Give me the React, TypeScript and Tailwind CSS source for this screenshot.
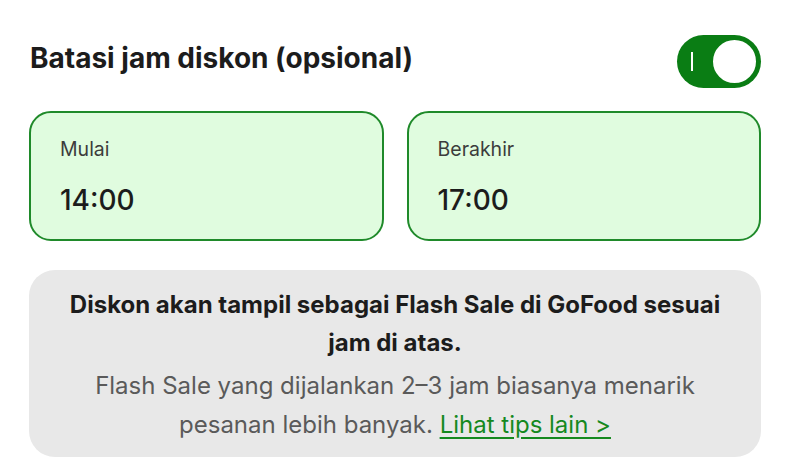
import React from "react";

const TimeCard = ({ label, value }: { label: string; value: string }) => {
  return (
    <div className="flex-1 h-[130px] rounded-[22px] border-2 border-[#1f8a2a] bg-[#e0fcdf] pl-[29px] pt-[24px]">
      <div className="text-[19.5px] leading-[24px] text-[#3c3c3c]">{label}</div>
      <div className="mt-[23px] text-[28px] leading-[32px] font-medium text-[#1c1c1c]">
        {value}
      </div>
    </div>
  );
};

const Toggle = () => {
  return (
    <div className="relative w-[84px] h-[53px] rounded-full bg-[#0a7d14]">
      <span className="absolute left-[14px] top-[17px] w-[2px] h-[19px] bg-white" />
      <span className="absolute right-[2px] top-[2px] w-[49px] h-[49px] rounded-full bg-white border-[3px] border-[#0a7d14]" />
    </div>
  );
};

const App = () => {
  return (
    <div
      className="w-[787px] h-[475px] bg-white pl-[29px] pr-[26px] pt-[35px]"
      style={{ fontFamily: "Inter, Roboto, 'Liberation Sans', sans-serif" }}
    >
      <div className="flex items-start justify-between pl-[1px]">
        <h1 className="mt-[7px] text-[28px] font-bold text-[#1c1c1c] leading-[32px]">
          Batasi jam diskon (opsional)
        </h1>
        <Toggle />
      </div>

      <div className="mt-[23px] flex gap-[23px]">
        <TimeCard label="Mulai" value="14:00" />
        <TimeCard label="Berakhir" value="17:00" />
      </div>

      <div className="mt-[29px] h-[187px] rounded-[26px] bg-[#e8e8e8] px-[30px] pt-[16px] text-center">
        <p className="text-[24px] leading-[38px] font-bold text-[#1c1c1c]">
          Diskon akan tampil sebagai Flash Sale di GoFood sesuai jam di atas.
        </p>
        <p className="mt-[4px] text-[24px] leading-[39px] text-[#5a5a5a]">
          Flash Sale yang dijalankan 2–3 jam biasanya menarik pesanan lebih banyak.{" "}
          <a className="inline-block text-[#15891f] underline underline-offset-4">
            Lihat tips lain &gt;
          </a>
        </p>
      </div>
    </div>
  );
};

export default App;
